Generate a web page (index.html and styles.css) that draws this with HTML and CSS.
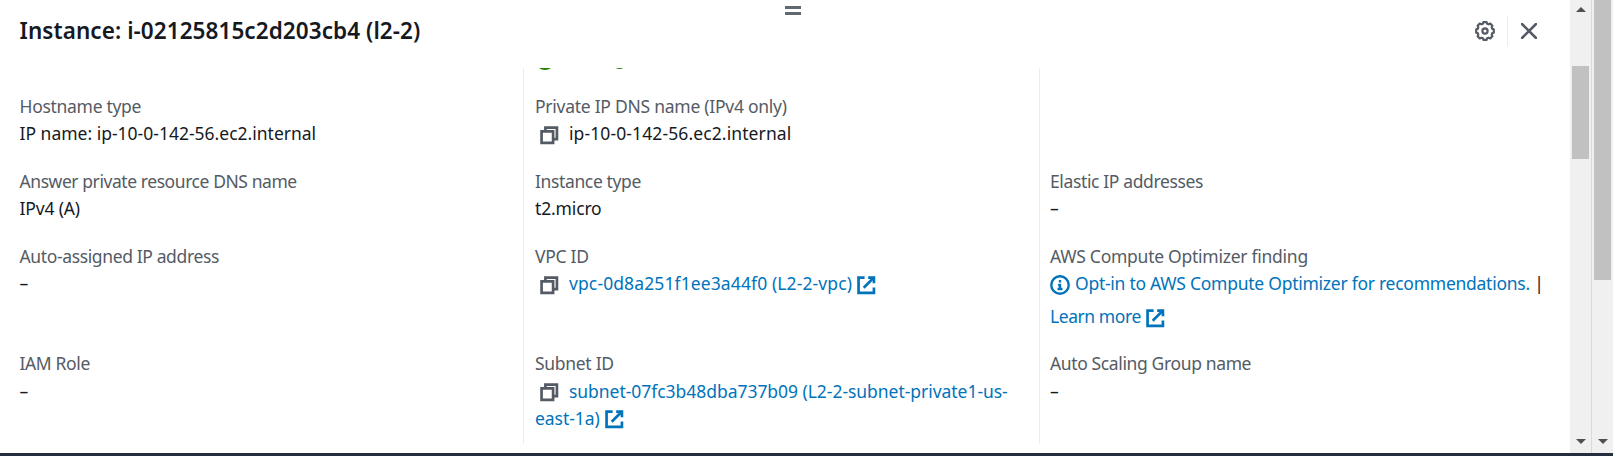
FILE: index.html
```html
<!DOCTYPE html>
<html lang="en">
<head>
<meta charset="utf-8">
<title>Instance details</title>
<link rel="stylesheet" href="styles.css">
</head>
<body>
<svg class="defs" aria-hidden="true">
  <symbol id="copy" viewBox="0 0 16 16"><path d="M2 5h9v9H2z"/><path d="M5 5V2h9v9h-3"/></symbol>
  <symbol id="external" viewBox="0 0 16 16"><path d="M9.500 2H14v4.500"/><path d="M6 10l8-8"/><path d="M14 9.700V14H2V2h4.700"/></symbol>
</svg>
<div class="app">
  <main class="panel">
    <header class="header">
      <h1 class="title">Instance: i-02125815c2d203cb4 (l2-2)</h1>
      <div class="actions">
        <svg class="gear" viewBox="0 0 20 20"><path d="M8.4 1.2h3.2l.5 1.500 1.500.6 1.700-.7 2.100 2.100-.7 1.700.6 1.500 1.500.5v3.200l-1.500.5-.6 1.500.7 1.700-2.100 2.100-1.700-.7-1.500.6-.5 1.500H8.400l-.5-1.500-1.500-.6-1.700.7-2.100-2.100.7-1.700-.6-1.500-1.500-.5V8.400l1.500-.5.6-1.500-.7-1.700 2.100-2.100 1.700.7 1.500-.6z"/><circle cx="10" cy="10" r="2.600"/></svg>
        <span class="separator"></span>
        <svg class="close" viewBox="0 0 16 16"><path d="M1 1l14 14M15 1L1 15"/></svg>
      </div>
      <div class="handle"></div>
    </header>
    <div class="details">
      <section class="column">
        <dl class="field"><dt class="snug">Hostname type</dt><dd>IP name: ip-10-0-142-56.ec2.internal</dd></dl>
        <dl class="field"><dt class="tightest">Answer private resource DNS name</dt><dd class="close-set">IPv4 (A)</dd></dl>
        <dl class="field"><dt class="tight">Auto-assigned IP address</dt><dd>–</dd></dl>
        <dl class="field last"><dt class="tight">IAM Role</dt><dd>–</dd></dl>
      </section>
      <section class="column">
        <div class="status"><span class="status-dot"></span><span class="status-tail"></span></div>
        <dl class="field"><dt class="soft">Private IP DNS name (IPv4 only)</dt><dd class="wide"><svg class="icon copy"><use href="#copy"/></svg>ip-10-0-142-56.ec2.internal</dd></dl>
        <dl class="field"><dt class="tight">Instance type</dt><dd class="close-set">t2.micro</dd></dl>
        <dl class="field"><dt class="snug">VPC ID</dt><dd class="wide"><svg class="icon copy"><use href="#copy"/></svg><a class="link">vpc-0d8a251f1ee3a44f0 (L2-2-vpc)<svg class="icon external"><use href="#external"/></svg></a></dd></dl>
        <dl class="field last"><dt class="snug">Subnet ID</dt><dd class="subnet"><svg class="icon copy"><use href="#copy"/></svg><a class="link">subnet-07fc3b48dba737b09 (L2-2-subnet-private1-us-<br>east-1a)<svg class="icon external"><use href="#external"/></svg></a></dd></dl>
      </section>
      <section class="column">
        <div class="field"></div>
        <dl class="field"><dt class="tight">Elastic IP addresses</dt><dd>–</dd></dl>
        <dl class="field"><dt class="soft">AWS Compute Optimizer finding</dt><dd class="soft"><svg class="info" viewBox="0 0 16 16"><circle cx="8" cy="8" r="7"/><path d="M8 11V8H6.500M6 11.200h4M8 4v2"/></svg><a class="link">Opt-in to AWS Compute Optimizer for recommendations.</a> |</dd><dd class="more tightest"><a class="link">Learn more<svg class="icon external"><use href="#external"/></svg></a></dd></dl>
        <dl class="field"><dt class="tight">Auto Scaling Group name</dt><dd class="lower">–</dd></dl>
      </section>
    </div>
  </main>
  <div class="scrollbar inner"><span class="arrow up"></span><span class="thumb"></span><span class="arrow down"></span></div>
  <div class="scrollbar outer"><span class="thumb"></span><span class="arrow down"></span></div>
</div>
<footer class="footer"></footer>
</body>
</html>
```

FILE: styles.css
```css
* { box-sizing: border-box; }
body { margin: 0; height: 456px; overflow: hidden; display: flex; flex-direction: column; background: #fff; color: #16191f; font: 17.5px/27px "Noto Sans", "Open Sans", sans-serif; }
.defs { display: none; }
.app { height: 453px; display: flex; }
.panel { width: 1570px; display: flex; flex-direction: column; }
.header { position: relative; height: 68px; padding: 16px 31px 0 19.5px; display: flex; justify-content: space-between; align-items: flex-start; }
.title { margin: 0; font-size: 22.5px; line-height: 30px; font-weight: 600; letter-spacing: .07px; white-space: nowrap; }
.actions { display: flex; align-items: center; height: 30px; }
.actions svg { fill: none; stroke: #545b64; }
.gear { width: 20px; height: 20px; stroke-width: 2.2; stroke-linejoin: round; }
.separator { width: 1px; height: 30px; margin: 0 13px 0 12px; background: #eaeded; }
.close { width: 16px; height: 16px; stroke-width: 2.6; stroke-linecap: round; margin-right: 2px; }
.handle { position: absolute; left: 785px; top: 6px; width: 16px; height: 9px; border: solid #62686f; border-width: 3px 0; }
.details { height: 376px; display: grid; grid-template-columns: 523px 516px 531px; overflow: hidden; }
.column { position: relative; display: grid; grid-template-rows: 75px 75px 107px 81px; padding: 25px 0 0 11px; border-left: 1px solid #eaeded; }
.column:first-child { padding-left: 19.5px; border-left: 0; }
.column:last-child { padding-left: 10px; }
.field, dd { margin: 0; }
.field { white-space: nowrap; }
dt { color: #545b64; }
/* Tracking steps for labels and values */
.tightest { letter-spacing: -.43px; }
.tight { letter-spacing: -.37px; }
.snug { letter-spacing: -.3px; }
.soft { letter-spacing: -.26px; }
.close-set { letter-spacing: -.15px; }
.wide { letter-spacing: .11px; }
.subnet { letter-spacing: -.04px; }
.last dd, .lower { padding-top: 1px; }
.link { color: #0073bb; }
.icon { width: 20.5px; height: 20.5px; fill: none; stroke: currentColor; stroke-width: 2.1; vertical-align: -5px; }
.subnet .icon { vertical-align: -4px; }
.copy { color: #545b64; margin: 0 10px 0 3.5px; }
.external { margin-left: 4px; }
.info { width: 20px; height: 20px; margin-right: 5px; fill: none; stroke: #0073bb; stroke-width: 1.9; vertical-align: -5px; }
.more { line-height: 39px; }
.status { position: absolute; left: 11px; top: 0; height: 3px; width: 120px; overflow: hidden; }
.status-dot { position: absolute; left: 0; top: -18px; width: 20px; height: 20px; border: 2px solid #1d8102; border-radius: 50%; }
.status-tail { position: absolute; left: 80px; top: -6px; width: 9px; height: 7px; border: 2px solid #1d8102; border-radius: 50%; }
.scrollbar { background: #f0f0f0; display: flex; flex-direction: column; align-items: center; }
.inner { width: 21px; padding: 7px 0 9px; }
.outer { width: 22px; border-left: 1px solid #dadada; padding: 0 0 9px; }
.thumb { width: 17px; background: #c1c1c1; }
.inner .thumb { height: 93px; margin-top: 54px; }
.outer .thumb { height: 280px; }
.arrow { border: solid transparent; border-width: 0 5px; }
.up { border-bottom: 5px solid #505050; }
.down { margin-top: auto; border-top: 5px solid #505050; }
.footer { height: 3px; background: #252e3f; }
```
